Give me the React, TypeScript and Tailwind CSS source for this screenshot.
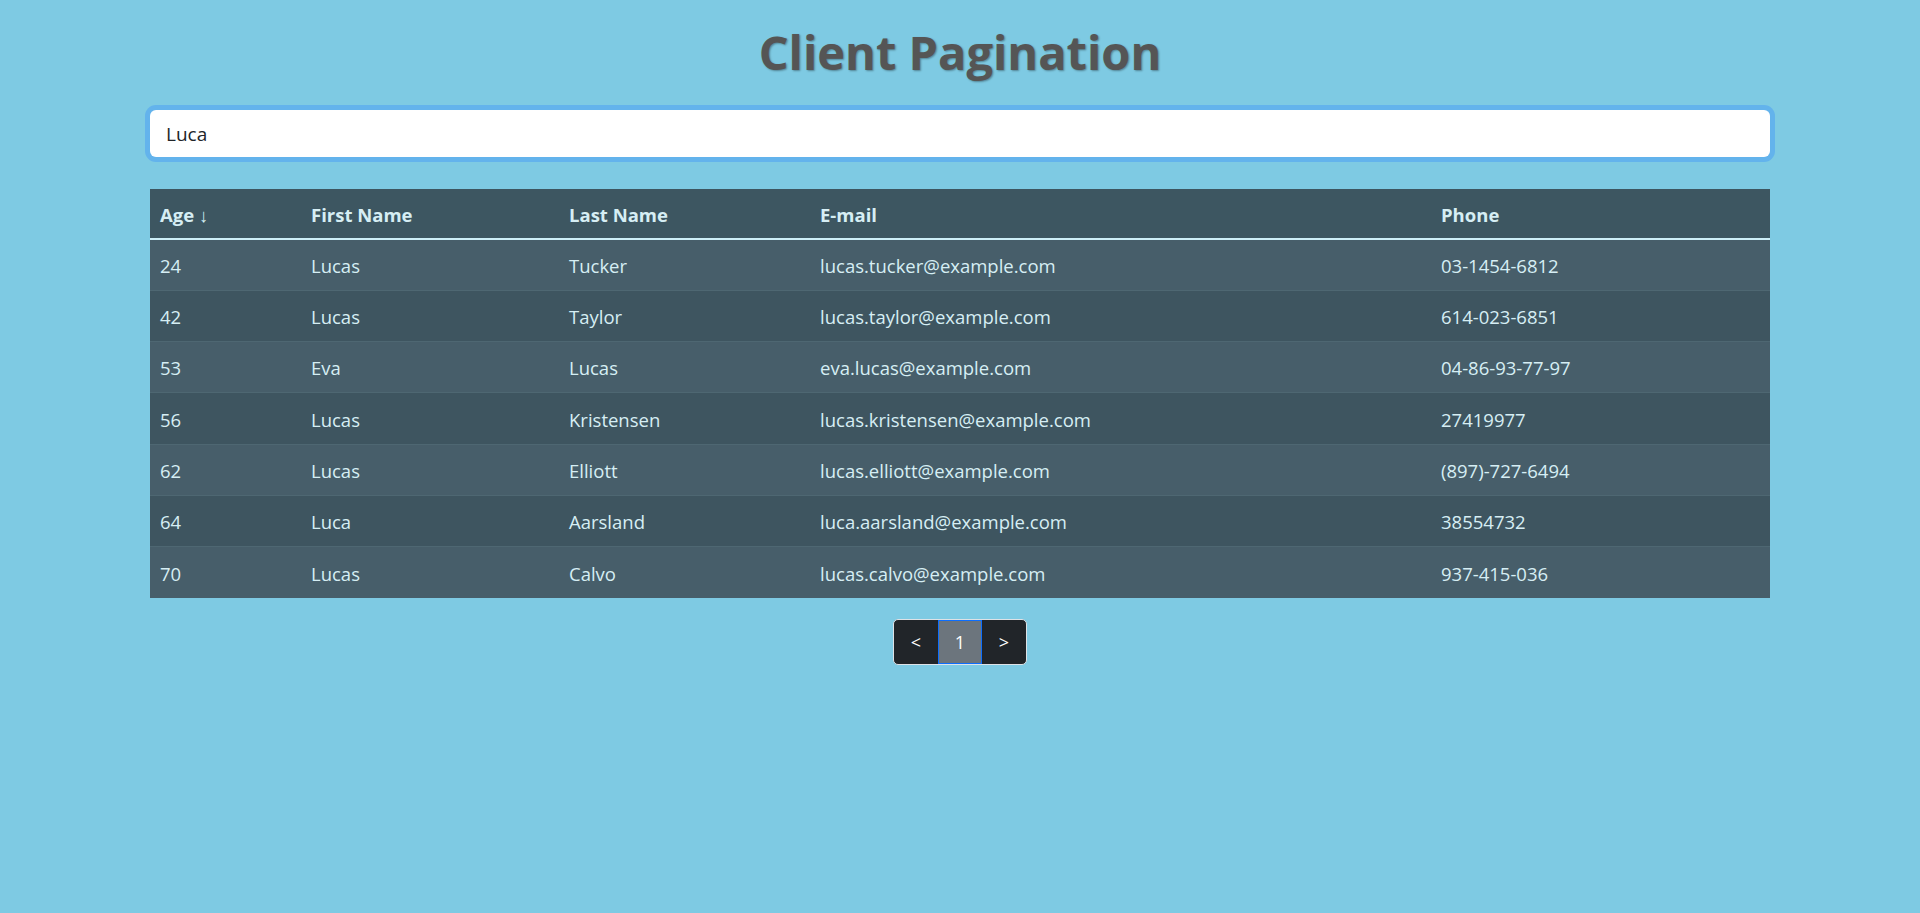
import { useState } from "react"

type Person = {
  age: number
  first: string
  last: string
  email: string
  phone: string
}

const people: Person[] = [
  { age: 24, first: "Lucas", last: "Tucker", email: "lucas.tucker@example.com", phone: "03-1454-6812" },
  { age: 42, first: "Lucas", last: "Taylor", email: "lucas.taylor@example.com", phone: "614-023-6851" },
  { age: 53, first: "Eva", last: "Lucas", email: "eva.lucas@example.com", phone: "04-86-93-77-97" },
  { age: 56, first: "Lucas", last: "Kristensen", email: "lucas.kristensen@example.com", phone: "27419977" },
  { age: 62, first: "Lucas", last: "Elliott", email: "lucas.elliott@example.com", phone: "(897)-727-6494" },
  { age: 64, first: "Luca", last: "Aarsland", email: "luca.aarsland@example.com", phone: "38554732" },
  { age: 70, first: "Lucas", last: "Calvo", email: "lucas.calvo@example.com", phone: "937-415-036" },
]

export default function App() {
  const [query, setQuery] = useState("Luca")

  return (
    <div className="min-h-screen bg-[#7ecae3] font-['Open_Sans',sans-serif]">
      <h1 className="pt-[14px] text-center text-[47px] font-bold leading-[76px] text-[#555555] [text-shadow:1px_1px_2px_rgba(0,0,0,0.35)]">
        Client Pagination
      </h1>

      <div className="mx-[150px] mt-[20px]">
        <input
          autoFocus
          value={query}
          onChange={(e) => setQuery(e.target.value)}
          className="block h-[47px] w-full rounded-[6px] bg-white px-[16px] text-[19px] text-[#212529] caret-black outline-none ring-[5px] ring-[#63b3ec]"
        />
      </div>

      {/* tabla */}
      <table className="mx-[150px] mt-[32px] w-[1620px] table-fixed border-collapse text-[18.5px] text-[#d6eef4]">
        <colgroup>
          <col className="w-[151px]" />
          <col className="w-[258px]" />
          <col className="w-[251px]" />
          <col className="w-[621px]" />
          <col className="w-[339px]" />
        </colgroup>
        <thead>
          <tr className="h-[50px] border-b-2 border-[#cdeef7] bg-[#3d5661] text-left font-bold">
            <th className="px-[10px] pt-[2px]">Age ↓</th>
            <th className="px-[10px] pt-[2px]">First Name</th>
            <th className="px-[10px] pt-[2px]">Last Name</th>
            <th className="px-[10px] pt-[2px]">E-mail</th>
            <th className="px-[10px] pt-[2px]">Phone</th>
          </tr>
        </thead>
        <tbody>
          {people.map((p, i) => (
            <tr
              key={p.email}
              className={`h-[51.3px] border-[#4e6772] ${i > 0 ? "border-t" : ""} ${i % 2 === 0 ? "bg-[#475e6a]" : "bg-[#3e5560]"}`}
            >
              <td className="px-[10px] pt-[2px]">{p.age}</td>
              <td className="px-[10px] pt-[2px]">{p.first}</td>
              <td className="px-[10px] pt-[2px]">{p.last}</td>
              <td className="px-[10px] pt-[2px]">{p.email}</td>
              <td className="px-[10px] pt-[2px]">{p.phone}</td>
            </tr>
          ))}
        </tbody>
      </table>

      <div className="mt-[21px] flex justify-center">
        <div className="flex h-[46px] overflow-hidden rounded-[5px] border border-[#dee2e6] bg-[#212529] text-[18px] text-white">
          <button className="w-[44px]">&lt;</button>
          <button className="w-[44px] border border-[#0d6efd] bg-[#6c757d]">1</button>
          <button className="w-[44px]">&gt;</button>
        </div>
      </div>
    </div>
  )
}
